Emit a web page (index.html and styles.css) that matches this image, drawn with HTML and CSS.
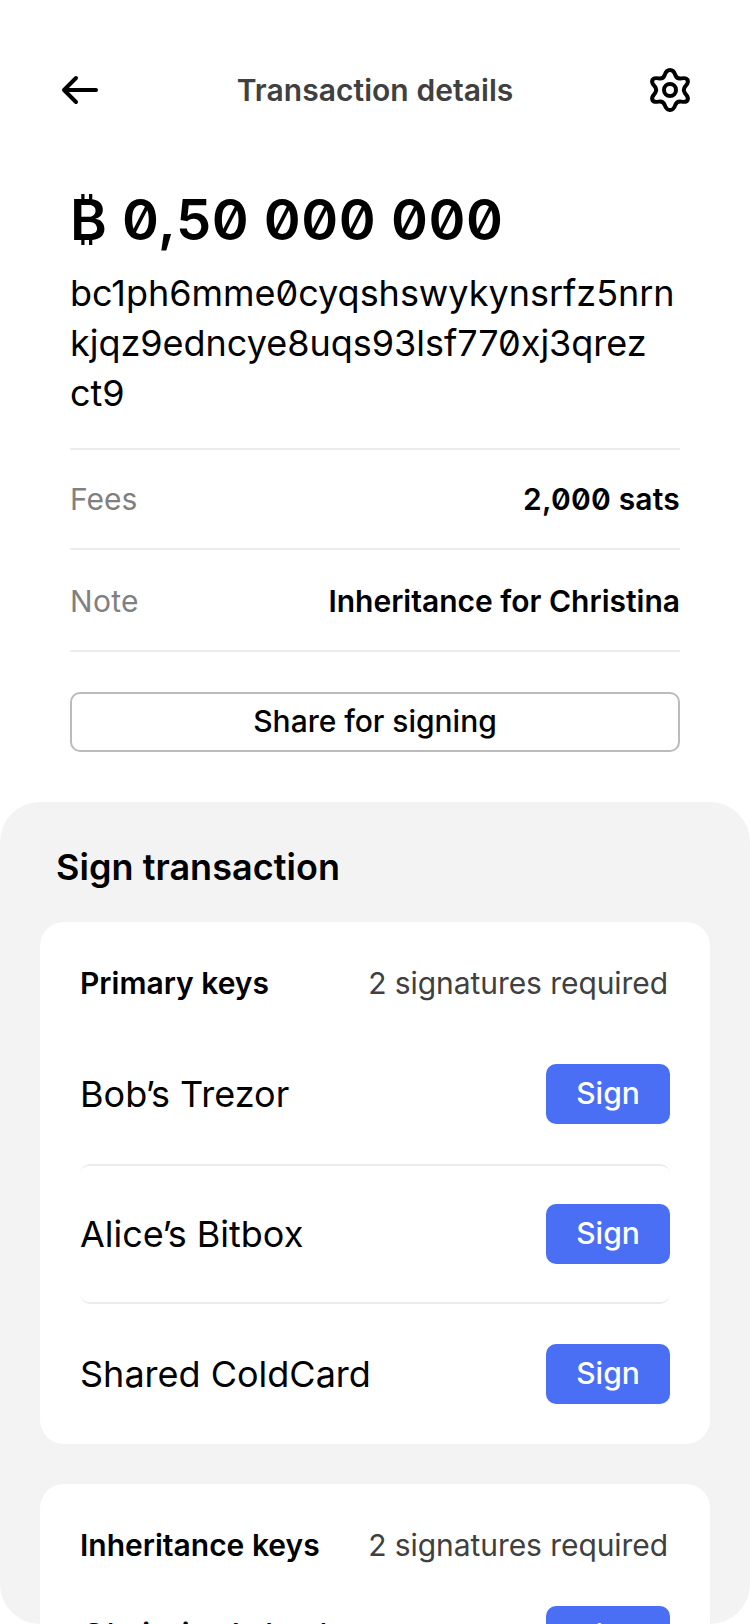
FILE: index.html
```html
<!DOCTYPE html>
<html lang="en">
<head>
<meta charset="utf-8">
<title>Transaction details</title>
<link rel="stylesheet" href="styles.css">
</head>
<body>
<main class="screen">
  <header class="topbar">
    <svg class="icon" viewBox="0 0 44 44" aria-label="Back"><path d="M18 10 6 22l12 12M6.500 22H38"/></svg>
    <h1 class="title">Transaction details</h1>
    <svg class="icon" viewBox="0 0 44 44" aria-label="Settings"><path d="M22 2C25.500 2 26.500 4.500 27.300 7C28.400 10 30.500 11 33.500 10.400C36.500 9.800 38.500 9.800 39.600 12C40.800 15 39.200 16.200 37.300 18.300C35.500 20.600 35.500 23.400 37.300 25.700C39.200 27.800 40.800 29 39.600 32C38.500 34.200 36.500 34.200 33.500 33.600C30.500 33 28.400 34 27.300 37C26.500 39.500 25.500 42 22 42C18.500 42 17.500 39.500 16.700 37C15.600 34 13.500 33 10.500 33.600C7.500 34.200 5.500 34.200 4.400 32C3.200 29 4.800 27.800 6.700 25.700C8.500 23.400 8.500 20.600 6.700 18.300C4.800 16.200 3.200 15 4.400 12C5.500 9.800 7.500 9.800 10.500 10.400C13.500 11 15.600 10 16.700 7C17.500 4.500 18.500 2 22 2Z"/><circle cx="22" cy="22" r="6"/></svg>
  </header>
  <section class="summary">
    <div class="amount">₿ 0,50 000 000</div>
    <div class="address">bc1ph6mme0cyqshswykynsrfz5nrn<br>kjqz9edncye8uqs93lsf770xj3qrez<br>ct9</div>
    <div class="row fees"><span class="label">Fees</span><span class="value sats">2,000 sats</span></div>
    <div class="row note"><span class="label">Note</span><span class="value">Inheritance for Christina</span></div>
    <button class="share">Share for signing</button>
  </section>
  <section class="sheet">
    <h2 class="heading">Sign transaction</h2>
    <div class="card">
      <div class="card-head"><h3 class="group">Primary keys</h3><span class="required">2 signatures required</span></div>
      <div class="key"><span class="name">Bob<span class="kern">’</span>s Trezor</span><button class="sign">Sign</button></div>
      <div class="key middle"><span class="name">Alice<span class="kern">’</span>s Bitbox</span><button class="sign">Sign</button></div>
      <div class="key"><span class="name">Shared ColdCard</span><button class="sign">Sign</button></div>
    </div>
    <div class="card">
      <div class="card-head"><h3 class="group">Inheritance keys</h3><span class="required">2 signatures required</span></div>
      <div class="key"><span class="name">Christina<span class="kern">’</span>s Ledger</span><button class="sign">Sign</button></div>
    </div>
  </section>
</main>
</body>
</html>
```
FILE: styles.css
```css
* { box-sizing: border-box; }
body { margin: 0; background: #fff; color: #000; font-family: Inter, "Liberation Sans", sans-serif; font-size: 30px; }
h1, h2, h3 { margin: 0; font-weight: 600; }
button { font: inherit; border-radius: 10px; padding: 0; }
.screen { height: 1624px; overflow: hidden; display: flex; flex-direction: column; font-feature-settings: "zero"; }
.topbar { height: 180px; padding: 0 58px; display: flex; align-items: center; justify-content: space-between; flex: none; }
.icon { width: 44px; height: 44px; fill: none; stroke: #000; stroke-width: 4; stroke-linecap: round; stroke-linejoin: round; }
.title { font-size: 30px; color: #404040; letter-spacing: 0.05px; }
.summary { height: 622px; padding: 0 70px; flex: none; display: flex; flex-direction: column; }
.amount { font-size: 56px; font-weight: 600; line-height: 80px; letter-spacing: 0.55px; }
.address { height: 180px; margin-top: 8px; font-size: 36px; line-height: 50px; white-space: nowrap; letter-spacing: -0.02px; }
.row { display: flex; justify-content: space-between; align-items: center; border-top: 2px solid #ececec; flex: none; }
.fees { height: 100px; }
.note { height: 104px; padding-top: 2px; border-bottom: 2px solid #ececec; }
.label { color: #808080; }
.note .label { letter-spacing: 0.3px; }
.value { font-weight: 600; }
.sats { letter-spacing: 0.2px; }
.share { flex: none; height: 60px; margin-top: 40px; padding-bottom: 2px; border: 2px solid #bbb; background: #fff; font-weight: 500; color: #000; letter-spacing: -0.03px; }
.sheet { flex: 1; min-height: 0; overflow: hidden; background: #f3f3f3; border-radius: 40px; padding: 0 40px; display: flex; flex-direction: column; }
.heading { font-size: 36px; line-height: 44px; padding: 43px 16px 33px; letter-spacing: 0.04px; }
.card { background: #fff; border-radius: 24px; padding: 40px 40px 0; margin-bottom: 40px; flex: none; }
.card-head { display: flex; justify-content: space-between; align-items: center; height: 42px; margin-bottom: 20px; }
.card + .card .card-head { margin-bottom: 0; }
.group { font-size: 30px; }
.required { color: #404040; padding-right: 2px; letter-spacing: -0.07px; }
.key { height: 140px; display: flex; justify-content: space-between; align-items: center; }
.middle { border: solid #ececec; border-width: 2px 0; border-radius: 10px; }
.name { font-size: 36px; }
.kern { margin-left: -1.6px; letter-spacing: -4px; }
.sign { width: 124px; height: 60px; padding-bottom: 2px; border: 0; background: #4a6ff5; color: #fff; font-weight: 500; }
```
